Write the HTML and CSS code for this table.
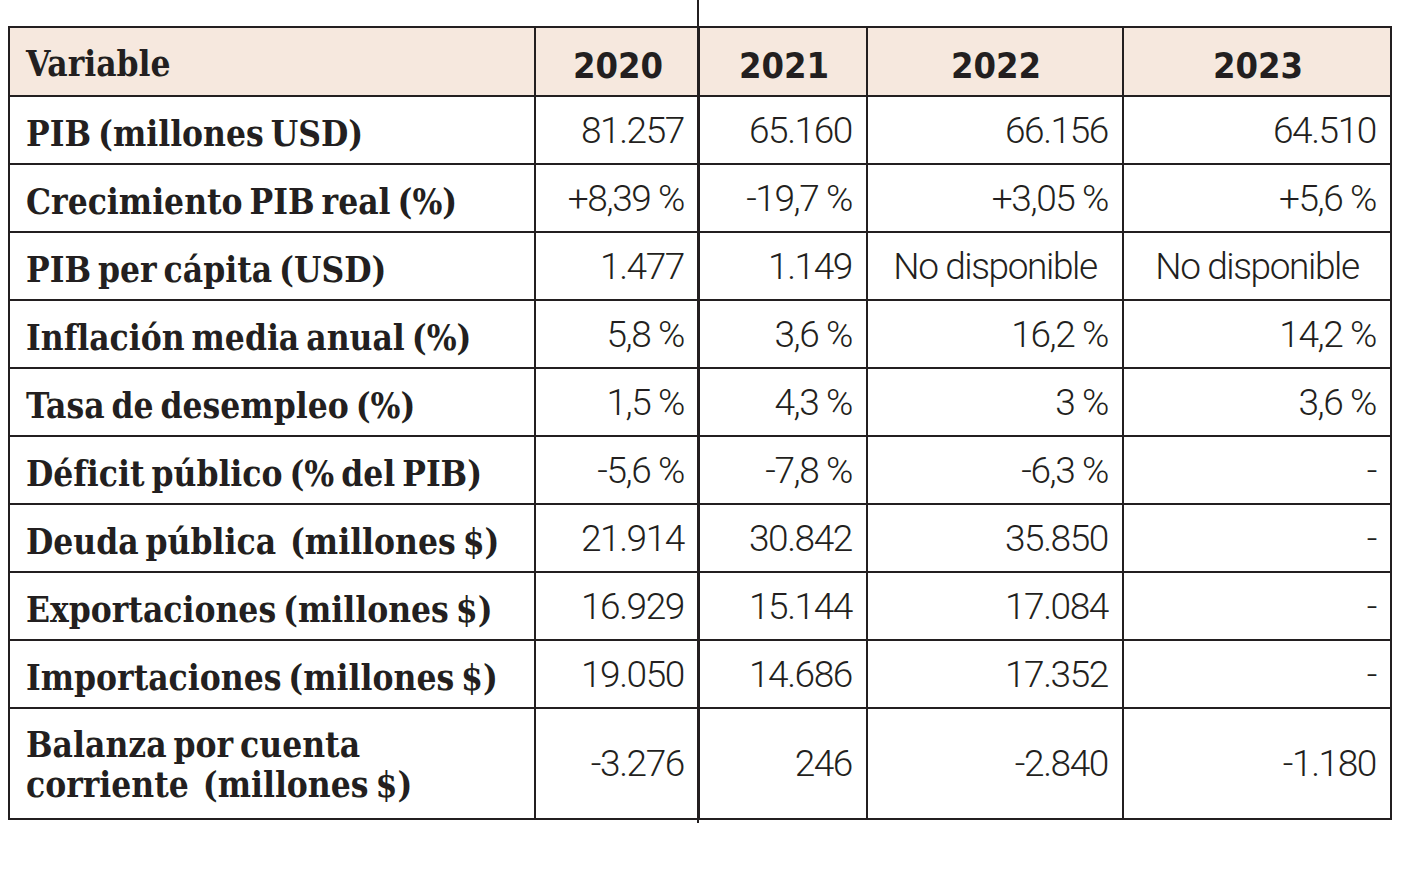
FILE: index.html
```html
<!DOCTYPE html>
<html lang="es">
<head>
<meta charset="utf-8">
<title>Indicadores económicos</title>
<link rel="stylesheet" href="styles.css">
</head>
<body>
<div class="page">
  <div class="stray-line"></div>
  <table class="data">
    <colgroup>
      <col class="c-var">
      <col class="c-2020">
      <col class="c-2021">
      <col class="c-2022">
      <col class="c-2023">
    </colgroup>
    <thead>
      <tr>
        <th class="lbl">Variable</th>
        <th>2020</th>
        <th>2021</th>
        <th>2022</th>
        <th>2023</th>
      </tr>
    </thead>
    <tbody>
      <tr><td class="lbl">PIB (millones USD)</td><td>81.257</td><td>65.160</td><td>66.156</td><td>64.510</td></tr>
      <tr><td class="lbl">Crecimiento PIB real (%)</td><td>+8,39 %</td><td>-19,7 %</td><td>+3,05 %</td><td>+5,6 %</td></tr>
      <tr><td class="lbl">PIB per cápita (USD)</td><td>1.477</td><td>1.149</td><td class="center">No disponible</td><td class="center">No disponible</td></tr>
      <tr><td class="lbl">Inflación media anual (%)</td><td>5,8 %</td><td>3,6 %</td><td>16,2 %</td><td>14,2 %</td></tr>
      <tr><td class="lbl">Tasa de desempleo (%)</td><td>1,5 %</td><td>4,3 %</td><td>3 %</td><td>3,6 %</td></tr>
      <tr><td class="lbl">Déficit público (% del PIB)</td><td>-5,6 %</td><td>-7,8 %</td><td>-6,3 %</td><td>-</td></tr>
      <tr><td class="lbl">Deuda pública&nbsp; (millones $)</td><td>21.914</td><td>30.842</td><td>35.850</td><td>-</td></tr>
      <tr><td class="lbl">Exportaciones (millones $)</td><td>16.929</td><td>15.144</td><td>17.084</td><td>-</td></tr>
      <tr><td class="lbl">Importaciones (millones $)</td><td>19.050</td><td>14.686</td><td>17.352</td><td>-</td></tr>
      <tr class="tall"><td class="lbl">Balanza por cuenta<br>corriente&nbsp; (millones $)</td><td>-3.276</td><td>246</td><td>-2.840</td><td>-1.180</td></tr>
    </tbody>
  </table>
</div>
</body>
</html>
```

FILE: styles.css
```css
html, body {
  margin: 0;
  padding: 0;
  background: #ffffff;
}

.page {
  position: relative;
  width: 1407px;
  height: 879px;
  padding: 26px 0 0 8px;
  box-sizing: border-box;
}

.stray-line {
  position: absolute;
  left: 697px;
  top: 0;
  width: 2px;
  height: 823px;
  background: #231f20;
}

.data {
  border-collapse: collapse;
  table-layout: fixed;
  width: 1382px;
  color: #231f20;
}

.c-var { width: 526px; }
.c-2020 { width: 164px; }
.c-2021 { width: 168px; }
.c-2022 { width: 256px; }
.c-2023 { width: 268px; }

.data th,
.data td {
  border: 2px solid #231f20;
  padding: 0 14px 0 16px;
  height: 64px;
  box-sizing: border-box;
  white-space: nowrap;
}

.data thead th {
  background: #f6e8de;
  height: 69px;
  font-family: "DejaVu Sans Condensed", "DejaVu Sans", sans-serif;
  font-stretch: condensed;
  font-weight: 700;
  font-size: 36px;
  text-align: center;
  padding-top: 8px;
}

.data thead th.lbl {
  font-family: "DejaVu Serif Condensed", "DejaVu Serif", serif;
  font-size: 35px;
  text-align: left;
  padding-top: 4px;
}

.data td {
  font-family: Roboto, "Liberation Sans", sans-serif;
  font-weight: 300;
  font-size: 37px;
  letter-spacing: -1.4px;
  text-align: right;
  height: 68px;
}

.data td.lbl {
  font-family: "DejaVu Serif Condensed", "DejaVu Serif", serif;
  font-stretch: condensed;
  font-weight: 700;
  font-size: 35px;
  letter-spacing: 0;
  word-spacing: -4px;
  text-align: left;
  padding-top: 6px;
}

.data td.center {
  text-align: center;
  padding: 0 6px;
}

.data tr.tall td {
  height: 111px;
}

.data tr.tall td.lbl {
  line-height: 40px;
  padding-top: 2px;
}
```
